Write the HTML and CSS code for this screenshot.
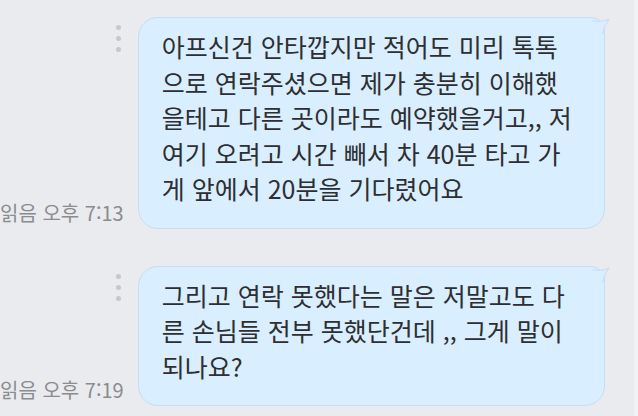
FILE: index.html
```html
<!DOCTYPE html>
<html lang="ko">
<head>
<meta charset="utf-8">
<link rel="stylesheet" href="styles.css">
</head>
<body>
<div class="screen">
  <div class="chat">
    <div class="row row-first">
      <div class="meta">
        <div class="dots"><span></span><span></span><span></span></div>
        <div class="time">읽음 오후 7:13</div>
      </div>
      <div class="bubble">
        <svg class="tail" width="22" height="20" viewBox="0 0 22 20"><path d="M0 3 Q10 6 19 2 Q14 8 12 17 L0 17 Z" fill="#d9eefe"/><path d="M2.5 3.6 Q10 6 19 2 Q14 8 12.5 17" fill="none" stroke="#c4def3" stroke-width="1"/></svg>
        <p class="text">아프신건 안타깝지만 적어도 미리 톡톡<br>으로 연락주셨으면 제가 충분히 이해했<br>을테고 다른 곳이라도 예약했을거고,, 저<br>여기 오려고 시간 빼서 차 40분 타고 가<br>게 앞에서 20분을 기다렸어요</p>
      </div>
    </div>
    <div class="row">
      <div class="meta">
        <div class="dots"><span></span><span></span><span></span></div>
        <div class="time">읽음 오후 7:19</div>
      </div>
      <div class="bubble">
        <svg class="tail" width="22" height="20" viewBox="0 0 22 20"><path d="M0 3 Q10 6 19 2 Q14 8 12 17 L0 17 Z" fill="#d9eefe"/><path d="M2.5 3.6 Q10 6 19 2 Q14 8 12.5 17" fill="none" stroke="#c4def3" stroke-width="1"/></svg>
        <p class="text">그리고 연락 못했다는 말은 저말고도 다<br>른 손님들 전부 못했단건데 ,, 그게 말이<br>되나요?</p>
      </div>
    </div>
  </div>
  <div class="strip"></div>
</div>
</body>
</html>
```

FILE: styles.css
```css
html, body {
  margin: 0;
  padding: 0;
}
body {
  background: #e9ebee;
  font-family: "Noto Sans CJK KR", "Noto Sans", sans-serif;
}
.screen {
  display: flex;
  width: 638px;
  height: 416px;
  overflow: hidden;
}
.chat {
  flex: 1;
  display: flex;
  flex-direction: column;
  gap: 37px;
  padding: 17px 29px 0 0;
}
.strip {
  width: 6px;
  background: #f1f2f4;
}
.row {
  display: flex;
  justify-content: flex-end;
  align-items: stretch;
  gap: 14px;
}
.meta {
  display: flex;
  flex-direction: column;
  justify-content: space-between;
  align-items: flex-end;
}
.dots {
  display: flex;
  flex-direction: column;
  gap: 6px;
  margin: 8px 3px 0 0;
}
.dots span {
  display: block;
  width: 5px;
  height: 5px;
  border-radius: 50%;
  background: #c6c8cb;
}
.time {
  font-size: 20px;
  line-height: 20px;
  color: #8b8c8e;
  white-space: nowrap;
  margin-bottom: 6px;
}
.bubble {
  position: relative;
  width: 467px;
  box-sizing: border-box;
  background: #d9eefe;
  border: 1px solid #c4def3;
  border-radius: 20px 14px 20px 20px;
  padding: 11px 10px 21px 23px;
}
.tail {
  position: absolute;
  top: -1px;
  right: -8px;
  overflow: visible;
}
.text {
  margin: 0;
  font-size: 25px;
  line-height: 35.5px;
  color: #2e2f31;
  white-space: nowrap;
}
```
